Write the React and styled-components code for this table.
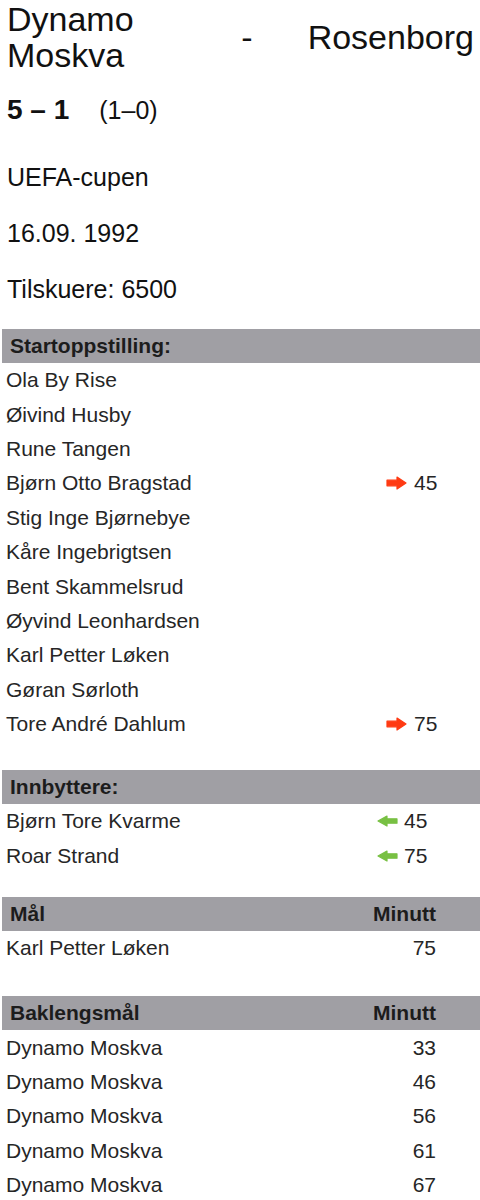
import React from "react";
import styled, { createGlobalStyle } from "styled-components";

const Global = createGlobalStyle`
  html, body { margin: 0; padding: 0; background: #fff; }
  body { font-family: "Liberation Sans", Arial, sans-serif; color: #222; }
`;

const Page = styled.div`
  width: 480px;
  padding: 0 0 0 2px;
  box-sizing: border-box;
`;

const MatchHeader = styled.div`
  display: grid;
  grid-template-columns: 190px 100px 1fr;
  align-items: center;
  height: 74px;
  padding: 0 6px 0 5px;
  font-size: 34px;
  line-height: 36px;
  color: #111;
`;

const Team = styled.div`
  text-align: ${(p) => p.$align || "left"};
`;

const Dash = styled.div`
  text-align: center;
`;

const ScoreLine = styled.div`
  display: flex;
  align-items: baseline;
  gap: 30px;
  margin-top: 16px;
  height: 40px;
  line-height: 40px;
  padding-left: 5px;
  color: #111;
`;

const Score = styled.span`
  font-weight: bold;
  font-size: 28px;
`;

const HalfTime = styled.span`
  font-size: 25px;
`;

const Info = styled.div`
  margin-top: 19px;
`;

const InfoLine = styled.div`
  font-size: 25px;
  line-height: 56px;
  height: 56px;
  padding-left: 5px;
  color: #111;
`;

const Section = styled.section`
  margin-top: ${(p) => p.$top}px;
`;

const HeaderBar = styled.div`
  display: grid;
  grid-template-columns: 1fr auto;
  align-items: center;
  height: 34px;
  background: #a09fa4;
  font-size: 21px;
  font-weight: bold;
  color: #1c1c1c;
  padding: 0 44px 0 8px;
`;

const Row = styled.div`
  display: grid;
  grid-template-columns: 1fr ${(p) => p.$col};
  align-items: center;
  height: 34.4px;
  font-size: 21px;
  color: #262626;
  padding-left: 4px;
`;

const Value = styled.div`
  display: flex;
  align-items: center;
  justify-content: ${(p) => (p.$right ? "flex-end" : "flex-start")};
  gap: ${(p) => p.$gap || 7}px;
  padding-right: ${(p) => (p.$right ? 44 : 0)}px;
`;

const ArrowOut = () => (
  <svg width="21" height="14" viewBox="0 0 21 14">
    <path d="M1 4.2 H11 V1 L20 7 L11 13 V9.8 H1 Z" fill="#ff3a12" stroke="#ff3a12" strokeWidth="1.2" strokeLinejoin="round" />
  </svg>
);

const ArrowIn = () => (
  <svg width="21" height="12" viewBox="0 0 21 12">
    <path d="M20 3.8 H10 V1 L1 6 L10 11 V8.2 H20 Z" fill="#78c043" stroke="#78c043" strokeWidth="1.2" strokeLinejoin="round" />
  </svg>
);

const starters = [
  ["Ola By Rise"],
  ["Øivind Husby"],
  ["Rune Tangen"],
  ["Bjørn Otto Bragstad", "45"],
  ["Stig Inge Bjørnebye"],
  ["Kåre Ingebrigtsen"],
  ["Bent Skammelsrud"],
  ["Øyvind Leonhardsen"],
  ["Karl Petter Løken"],
  ["Gøran Sørloth"],
  ["Tore André Dahlum", "75"],
];

const subs = [
  ["Bjørn Tore Kvarme", "45"],
  ["Roar Strand", "75"],
];

const goals = [["Karl Petter Løken", "75"]];

const against = ["33", "46", "56", "61", "67"].map((m) => ["Dynamo Moskva", m]);

export default function App() {
  return (
    <Page>
      <Global />
      <MatchHeader>
        <Team>Dynamo Moskva</Team>
        <Dash>-</Dash>
        <Team $align="right">Rosenborg</Team>
      </MatchHeader>
      <ScoreLine>
        <Score>5 – 1</Score>
        <HalfTime>(1–0)</HalfTime>
      </ScoreLine>
      <Info>
        <InfoLine>UEFA-cupen</InfoLine>
        <InfoLine>16.09. 1992</InfoLine>
        <InfoLine>Tilskuere: 6500</InfoLine>
      </Info>

      <Section $top={12}>
        <HeaderBar>Startoppstilling:</HeaderBar>
        {starters.map(([name, min]) => (
          <Row key={name} $col="94px">
            <span>{name}</span>
            <Value>
              {min && (
                <>
                  <ArrowOut />
                  <span>{min}</span>
                </>
              )}
            </Value>
          </Row>
        ))}
      </Section>

      <Section $top={29}>
        <HeaderBar>Innbyttere:</HeaderBar>
        {subs.map(([name, min]) => (
          <Row key={name} $col="103px">
            <span>{name}</span>
            <Value $gap={6}>
              <ArrowIn />
              <span>{min}</span>
            </Value>
          </Row>
        ))}
      </Section>

      <Section $top={24}>
        <HeaderBar>
          <span>Mål</span>
          <span>Minutt</span>
        </HeaderBar>
        {goals.map(([name, min]) => (
          <Row key={name} $col="auto">
            <span>{name}</span>
            <Value $right>{min}</Value>
          </Row>
        ))}
      </Section>

      <Section $top={31}>
        <HeaderBar>
          <span>Baklengsmål</span>
          <span>Minutt</span>
        </HeaderBar>
        {against.map(([name, min], i) => (
          <Row key={i} $col="auto">
            <span>{name}</span>
            <Value $right>{min}</Value>
          </Row>
        ))}
      </Section>
    </Page>
  );
}
